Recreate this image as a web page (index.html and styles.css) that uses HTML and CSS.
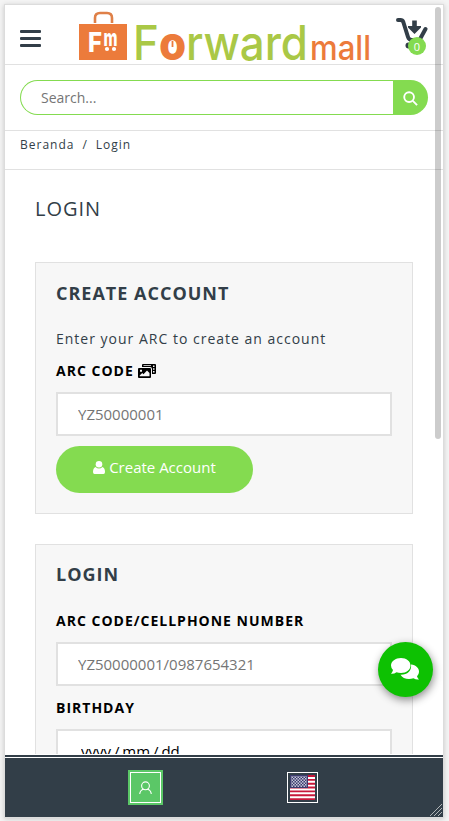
FILE: index.html
```
<!DOCTYPE html>
<html lang="en">
<head>
    <meta charset="UTF-8">
    <meta name="viewport" content="width=device-width, initial-scale=1.0">
    <title>Login - Forward Mall</title>
    <link rel="stylesheet" href="styles.css">
</head>
<body>

    <div class="frame">
        <div class="page">
            <header>
                <button class="menu-btn" aria-label="Menu"><span></span><span></span><span></span></button>

                <svg class="logo" viewBox="0 0 296 54" width="296" height="54">
                    <!-- Shopping bag -->
                    <path d="M19 13V8Q19 3 24 3H31Q36 3 36 8V13" fill="none" stroke="#df8048" stroke-width="2.600"/>
                    <rect x="3" y="14" width="48" height="36" fill="#ec7b3b"/>
                    <text class="bag-text" y="42" font-size="27" textLength="14" lengthAdjust="spacingAndGlyphs" x="12">F</text>
                    <text class="bag-text" y="35.500" font-size="24" textLength="14" lengthAdjust="spacingAndGlyphs" x="27.500">m</text>
                    <circle cx="31" cy="39" r="2.100" fill="#fff"/>
                    <circle cx="38" cy="39" r="2.100" fill="#fff"/>
                    <!-- Word mark -->
                    <text class="word" x="57" y="50" textLength="175" lengthAdjust="spacingAndGlyphs">F<tspan class="word-o">o</tspan>rward</text>
                    <path d="M96.500 31v6" stroke="#ec7b3b" stroke-width="1.800"/>
                    <text class="word word-mall" y="49.500" x="234" textLength="61" lengthAdjust="spacingAndGlyphs">mall</text>
                </svg>

                <div class="cart">
                    <svg viewBox="0 0 32 32" width="32" height="32">
                        <path d="M2 2H4.500Q6.500 2 7.300 4L12 19Q13 22 16 22H23.500L29.500 11" fill="none" stroke="#323e48" stroke-width="4" stroke-linecap="round" stroke-linejoin="round"/>
                        <path d="M16.200 2.500h4.600v5.500h4.200v1.500l-6.500 6.500-6.500-6.500v-1.500h4.200z" fill="#323e48"/>
                        <circle cx="12.500" cy="27.500" r="3" fill="#323e48"/>
                        <circle cx="25" cy="27.500" r="3" fill="#323e48"/>
                    </svg>
                    <span class="cart-count">0</span>
                </div>
            </header>

            <form class="search">
                <input type="text" placeholder="Search...">
                <button type="button" aria-label="Search">
                    <svg viewBox="0 0 16 16" width="15" height="15"><circle cx="6.500" cy="6.500" r="5.200"/><path d="M10.500 10.500L15 15"/></svg>
                </button>
            </form>

            <nav class="breadcrumb"><a href="#">Beranda</a><span>/</span><a href="#">Login</a></nav>

            <main>
                <h1>LOGIN</h1>

                <section class="panel">
                    <h2>CREATE ACCOUNT</h2>
                    <p>Enter your ARC to create an account</p>
                    <label for="arc">ARC CODE
                        <svg class="photo-icon" viewBox="0 0 18 14" width="18" height="14">
                            <path fill-rule="evenodd" d="M5 0H17Q18 0 18 1V9Q18 10 17 10H14V5Q14 3 12 3H4V1Q4 0 5 0ZM15 1.500V3h1.500V1.500ZM15 4.300V5.800h1.500V4.300ZM15 7V8.500h1.500V7ZM5.500 1.300V2H13V1.300Z"/>
                            <path fill-rule="evenodd" d="M1 4H12Q13 4 13 5V13Q13 14 12 14H1Q0 14 0 13V5Q0 4 1 4ZM1.700 11.500L4.200 9 5.500 10.200 9 6.500 11.500 9V12.300H1.700ZM2 5.700V7.700H4V5.700Z"/>
                        </svg>
                    </label>
                    <input type="text" id="arc" placeholder="YZ50000001">
                    <button type="button" class="create-btn">
                        <svg viewBox="0 0 12 13" width="12" height="13"><circle cx="6" cy="3.300" r="3.300"/><path d="M2.500 6Q6 9 9.500 6Q12 7 12 11Q12 13 10.500 13H1.500Q0 13 0 11Q0 7 2.500 6Z"/></svg>
                        Create Account
                    </button>
                </section>

                <section class="panel login-panel">
                    <h2>LOGIN</h2>
                    <label for="phone">ARC CODE/CELLPHONE NUMBER</label>
                    <input type="text" id="phone" placeholder="YZ50000001/0987654321">
                    <label for="birthday">BIRTHDAY</label>
                    <input type="text" id="birthday" class="date-input" value="yyyy / mm / dd">
                </section>
            </main>
        </div>

        <footer>
            <a class="user-link" href="#" aria-label="Account">
                <svg viewBox="0 0 13 14" width="13" height="14"><circle cx="6.500" cy="4.800" r="3.900"/><path d="M.7 13Q1.200 8.800 4.700 8.200M12.300 13Q11.800 8.800 8.300 8.200"/></svg>
            </a>
            <a class="flag-link" href="#" aria-label="English">
                <svg viewBox="0 0 25 25" width="25" height="25">
                    <defs>
                        <pattern id="stars" width="3" height="3" patternUnits="userSpaceOnUse">
                            <path d="M0 0h1.500v1.500H0zM1.500 1.500H3V3H1.500z" fill="#c4c6d8"/>
                        </pattern>
                    </defs>
                    <path fill="#fff" d="M0 0h25v25H0z"/>
                    <path d="M0 1H25M0 4.850H25M0 8.700H25M0 12.550H25M0 16.400H25M0 20.250H25M0 24.100H25" stroke="#c8173a" stroke-width="1.930"/>
                    <path fill="#3c3b6e" d="M0 0h18v13H0z"/>
                    <path fill="url(#stars)" d="M1 1h16v11H1z"/>
                </svg>
            </a>
        </footer>

        <div class="scrollbar"></div>
        <button class="chat-btn" aria-label="Chat">
            <svg viewBox="0 0 28 22" width="28" height="22">
                <path d="M20 6.500C25 7 28 10 28 13.500C28 15.500 27 17 26 18.200Q26.500 20 28 21.500Q25 22 22.500 20.300C17 22 11.500 20.500 9.500 16.700C16 17 21 13 20 6.500Z"/>
                <path d="M10 0C15.500 0 19.500 3.300 19.500 7.500S15.500 15 10 15Q7.500 15 5.500 14.200Q3 16 0 15.700Q1.500 14 2 12Q0 10 0 7.500C0 3.300 4.500 0 10 0Z"/>
            </svg>
        </button>
        <svg class="resize-grip" viewBox="0 0 12 12" width="12" height="12"><path d="M0 12L12 0M4 12L12 4M8 12L12 8"/></svg>
    </div>

</body>
</html>
```

FILE: styles.css
```
* {
    box-sizing: border-box;
}

body {
    margin: 0;
    padding: 4px;
    height: 821px;
    overflow: hidden;
    background-color: #f4f4f4;
    font-family: "Open Sans", sans-serif;
    color: #323e48;
}

button {
    border: none;
    padding: 0;
    cursor: pointer;
}

a {
    color: inherit;
    text-decoration: none;
}

.frame {
    position: relative;
    width: 440px;
    height: 814px;
    border: 1px solid #dcdcdc;
    background-color: white;
    box-shadow: 0 1px 5px rgba(0, 0, 0, 0.18);
}

.page {
    height: 749px;
    overflow: hidden;
}

/* Header */
header {
    display: flex;
    height: 60px;
    border-bottom: 1px solid #e1e1e1;
}

.menu-btn {
    display: flex;
    flex-direction: column;
    justify-content: space-between;
    width: 21px;
    height: 17px;
    margin: 25px 35px 0 15px;
    background: none;
}

.menu-btn span {
    height: 3px;
    border-radius: 1px;
    background-color: #323e48;
}

.logo {
    margin-top: 5px;
    overflow: visible;
}

.bag-text {
    font-family: Inter, sans-serif;
    font-weight: 800;
    fill: white;
}

.word {
    font-family: Inter, sans-serif;
    font-size: 48px;
    font-weight: 500;
    fill: #aac846;
}

.word-o {
    font-weight: 800;
    fill: #ec7b3b;
}

.word-mall {
    font-size: 34px;
    fill: #ec7b3b;
}

.cart {
    position: relative;
    margin: 13px 0 0 24px;
}

.cart-count {
    position: absolute;
    left: 12px;
    top: 19px;
    width: 18px;
    height: 18px;
    border-radius: 50%;
    background-color: #84db50;
    color: white;
    font-size: 11px;
    line-height: 19px;
    text-align: center;
}

/* Search */
.search {
    display: flex;
    height: 66px;
    padding: 15px;
    border-bottom: 1px solid #e1e1e1;
}

.search input {
    width: 373px;
    height: 35px;
    padding: 0 20px;
    border: 1px solid #84db50;
    border-right: none;
    border-radius: 18px 0 0 18px;
    font: 14px "Open Sans", sans-serif;
    outline: none;
}

.search button {
    width: 35px;
    height: 35px;
    border-radius: 0 18px 18px 0;
    background-color: #84db50;
}

.search svg {
    display: block;
    margin: 1px auto 0;
    fill: none;
    stroke: white;
    stroke-width: 2;
}

.breadcrumb {
    display: flex;
    gap: 8px;
    height: 39px;
    padding: 4px 15px;
    border-bottom: 1px solid #e1e1e1;
    font-size: 12px;
    line-height: 20px;
    letter-spacing: 1px;
}

main {
    padding: 24px 30px 0;
}

h1 {
    margin: 0 0 38px;
    font-size: 20px;
    font-weight: 400;
    line-height: 30px;
    letter-spacing: 1px;
}

/* Form panels */
.panel {
    height: 252px;
    padding: 19px 20px;
    margin-bottom: 30px;
    border: 1px solid #e1e1e1;
    background-color: #f7f7f7;
}

.panel h2 {
    margin: 0 0 23px;
    font-size: 18px;
    font-weight: 700;
    line-height: 22px;
    letter-spacing: 1px;
}

.login-panel {
    padding-top: 18px;
}

.login-panel h2 {
    margin-bottom: 24px;
}

.panel p {
    margin: 0 0 8px;
    font-size: 14px;
    line-height: 24px;
    letter-spacing: 1px;
}

.panel label {
    display: block;
    margin-bottom: 9px;
    color: black;
    font-size: 14px;
    font-weight: 700;
    line-height: 24px;
    letter-spacing: 1px;
}

.panel label svg {
    vertical-align: -2px;
}

.panel input {
    display: block;
    width: 336px;
    height: 44px;
    padding: 0 20px;
    margin-bottom: 10px;
    border: 2px solid #e1e1e1;
    background-color: white;
    font: 15px "Open Sans", sans-serif;
    outline: none;
}

.panel .date-input {
    padding-left: 23px;
    word-spacing: -1px;
}

input::placeholder {
    color: #757575;
}

.create-btn {
    width: 197px;
    height: 47px;
    padding-bottom: 5px;
    border-radius: 24px;
    background-color: #84db50;
    color: white;
    font: 15px "Open Sans", sans-serif;
}

.create-btn svg {
    fill: white;
    vertical-align: -1px;
}

/* Bottom bar */
footer {
    display: flex;
    justify-content: center;
    gap: 124px;
    height: 62px;
    margin-top: 1px;
    padding: 13px 2px 0 0;
    border-top: 2px solid #323e48;
    background: linear-gradient(white 1px, #323e48 1px);
}

.user-link,
.flag-link {
    display: flex;
    align-items: center;
    justify-content: center;
}

.user-link {
    width: 35px;
    height: 35px;
    border: 2px solid #5bc767;
    background-color: #5bc767;
    box-shadow: inset 0 0 0 1px white;
}

.user-link svg {
    fill: none;
    stroke: white;
    stroke-width: 1.100;
}

.flag-link {
    width: 31px;
    height: 31px;
    margin-top: 2px;
    border: 1px solid white;
}

/* Floating parts */
.scrollbar {
    position: absolute;
    top: 2px;
    right: 2px;
    width: 6px;
    height: 432px;
    border-radius: 3px;
    background-color: rgba(0, 0, 0, 0.2);
}

.chat-btn {
    display: flex;
    align-items: center;
    justify-content: center;
    position: absolute;
    left: 373px;
    top: 637px;
    width: 55px;
    height: 55px;
    border-radius: 50%;
    background-color: #0dc102;
    box-shadow: 1px 3px 8px rgba(0, 0, 0, 0.45);
}

.chat-btn svg {
    margin: 0 1px 1px 0;
    fill: white;
}

.resize-grip {
    position: absolute;
    right: 1px;
    bottom: 1px;
    fill: none;
    stroke: #b0b4b6;
}
```
